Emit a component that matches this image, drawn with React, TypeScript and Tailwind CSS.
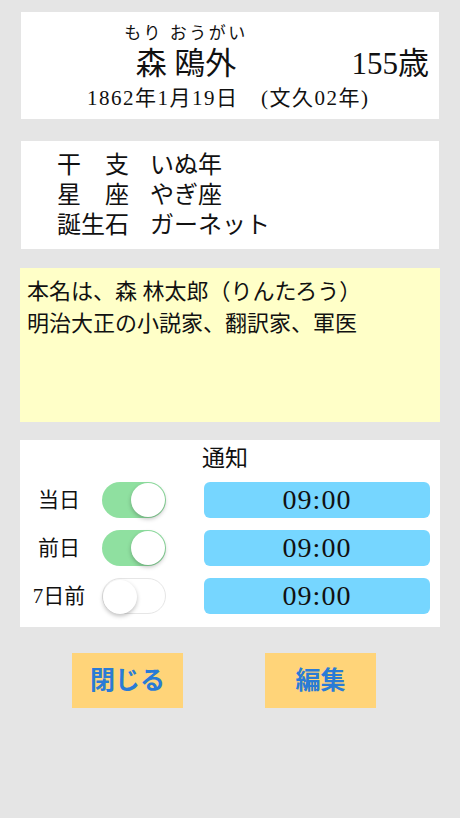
const serif = "font-['Liberation_Serif','Noto_Sans_CJK_JP',serif]";

function Toggle({ on }: { on: boolean }) {
  return (
    <div
      className={
        "relative h-[36px] w-[64px] shrink-0 rounded-full " +
        (on ? "bg-[#8fe0a0]" : "border border-[#e6e6e6] bg-white")
      }
    >
      <div
        className={
          "absolute top-[1px] size-[34px] rounded-full bg-white shadow-[0_2px_4px_rgba(0,0,0,0.25)] " +
          (on ? "right-[1px]" : "left-[0px] top-[0px]")
        }
      />
    </div>
  );
}

function NotifyRow({ label, on }: { label: string; on: boolean }) {
  return (
    <div className="flex h-[36px] items-center">
      <div className="w-[78px] text-center text-[21px] leading-none">{label}</div>
      <div className="ml-[4px]">
        <Toggle on={on} />
      </div>
      <div className="ml-[38px] flex h-[36px] flex-1 items-center justify-center rounded-[6px] bg-[#76d6ff] text-[28px] leading-none tracking-[1px]">
        09:00
      </div>
    </div>
  );
}

export default function App() {
  return (
    <div className={`${serif} min-h-[818px] bg-[#e5e5e5] px-[20px] pt-[12px] text-[#111]`}>
      <div className="mx-[1px] flex h-[107px] flex-col bg-white">
        <div className="flex items-end pt-[13px]">
          <div className="flex w-[330px] flex-col items-center">
            <div className="text-[17px] leading-none tracking-[2.5px]">もり おうがい</div>
            <div className="mt-[6px] text-[31px] leading-none">森 鴎外</div>
          </div>
          <div className="ml-auto mr-[10px] text-[31px] leading-none">155歳</div>
        </div>
        <div className="mt-[9px] pl-[66px] text-[21px] leading-none tracking-[1.5px] whitespace-pre">
          1862年1月19日　(文久02年)
        </div>
      </div>

      <div className="mx-[1px] mt-[22px] flex h-[108px] flex-col bg-white pl-[36px] pt-[9px] text-[24px] leading-[30px]">
        <div className="flex">
          <span className="flex w-[72px] justify-between"><span>干</span><span>支</span></span>
          <span className="ml-[21px]">いぬ年</span>
        </div>
        <div className="flex">
          <span className="flex w-[72px] justify-between"><span>星</span><span>座</span></span>
          <span className="ml-[21px]">やぎ座</span>
        </div>
        <div className="flex">
          <span className="w-[72px]">誕生石</span>
          <span className="ml-[21px]">ガーネット</span>
        </div>
      </div>

      <div className="mt-[19px] h-[154px] bg-[#ffffc8] px-[7px] pt-[8px] text-[22px] leading-[32px]">
        <div>本名は、森 林太郎（りんたろう）</div>
        <div>明治大正の小説家、翻訳家、軍医</div>
      </div>

      <div className="mt-[18px] flex h-[187px] flex-col bg-white pr-[10px]">
        <div className="pt-[7px] text-center text-[23px] leading-none">通知</div>
        <div className="mt-[12px] flex flex-col gap-[12px]">
          <NotifyRow label="当日" on />
          <NotifyRow label="前日" on />
          <NotifyRow label="7日前" on={false} />
        </div>
      </div>

      <div className="mt-[26px] flex">
        <button className="ml-[52px] h-[55px] w-[111px] bg-[#ffd479] text-[25px] font-bold text-[#2a7bd6]">
          閉じる
        </button>
        <button className="ml-[82px] h-[55px] w-[111px] bg-[#ffd479] text-[25px] font-bold text-[#2a7bd6]">
          編集
        </button>
      </div>
    </div>
  );
}
